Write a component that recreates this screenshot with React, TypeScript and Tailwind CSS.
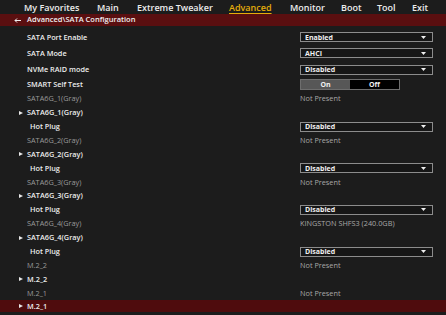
import React from 'react';

type Row = {
  label: string;
  kind: 'select' | 'toggle' | 'info' | 'head' | 'plain';
  value?: string;
  gray?: boolean;
  indent?: boolean;
  active?: boolean;
  h: string;
};

const tabs = [
  { name: 'My Favorites', w: 'w-[73px]' },
  { name: 'Main', w: 'w-[40px]' },
  { name: 'Extreme Tweaker', w: 'w-[92px]' },
  { name: 'Advanced', w: 'w-[61px]' },
  { name: 'Monitor', w: 'w-[51px]' },
  { name: 'Boot', w: 'w-[36px]' },
  { name: 'Tool', w: 'w-[35px]' },
  { name: 'Exit', w: 'w-[30px]' },
];

const rows: Row[] = [
  { label: 'SATA Port Enable', kind: 'select', value: 'Enabled', h: 'h-[16.3px]' },
  { label: 'SATA Mode', kind: 'select', value: 'AHCI', h: 'h-[16.3px]' },
  { label: 'NVMe RAID mode', kind: 'select', value: 'Disabled', h: 'h-[16.3px]' },
  { label: 'SMART Self Test', kind: 'toggle', h: 'h-[14px]' },
  { label: 'SATA6G_1(Gray)', kind: 'info', value: 'Not Present', gray: true, h: 'h-[13.9px]' },
  { label: 'SATA6G_1(Gray)', kind: 'head', h: 'h-[13.9px]' },
  { label: 'Hot Plug', kind: 'select', value: 'Disabled', indent: true, h: 'h-[13.9px]' },
  { label: 'SATA6G_2(Gray)', kind: 'info', value: 'Not Present', gray: true, h: 'h-[13.9px]' },
  { label: 'SATA6G_2(Gray)', kind: 'head', h: 'h-[13.9px]' },
  { label: 'Hot Plug', kind: 'select', value: 'Disabled', indent: true, h: 'h-[13.9px]' },
  { label: 'SATA6G_3(Gray)', kind: 'info', value: 'Not Present', gray: true, h: 'h-[13.9px]' },
  { label: 'SATA6G_3(Gray)', kind: 'head', h: 'h-[13.9px]' },
  { label: 'Hot Plug', kind: 'select', value: 'Disabled', indent: true, h: 'h-[13.9px]' },
  { label: 'SATA6G_4(Gray)', kind: 'info', value: 'KINGSTON SHFS3 (240.0GB)', gray: true, h: 'h-[13.9px]' },
  { label: 'SATA6G_4(Gray)', kind: 'head', h: 'h-[13.9px]' },
  { label: 'Hot Plug', kind: 'select', value: 'Disabled', indent: true, h: 'h-[13.9px]' },
  { label: 'M.2_2', kind: 'info', value: 'Not Present', gray: true, h: 'h-[13.9px]' },
  { label: 'M.2_2', kind: 'head', h: 'h-[13.9px]' },
  { label: 'M.2_1', kind: 'info', value: 'Not Present', gray: true, h: 'h-[13.9px]' },
  { label: 'M.2_1', kind: 'head', active: true, h: 'h-[11.8px]' },
];

function Caret() {
  return (
    <svg width="5" height="3" viewBox="0 0 5 3" className="shrink-0">
      <polygon points="0,0 5,0 2.5,3" fill="#f0f0f0" />
    </svg>
  );
}

function Pointer() {
  return (
    <svg width="4" height="4" viewBox="0 0 4 4" className="absolute left-[19px] top-1/2 -translate-y-1/2">
      <polygon points="0,0 4,2 0,4" fill="#e8e8e8" />
    </svg>
  );
}

function BackArrow() {
  return (
    <svg width="7" height="5" viewBox="0 0 7 5" className="ml-[14px] mr-[6px] shrink-0">
      <path d="M7 2.5H1M3 0.5L1 2.5L3 4.5" stroke="#f0f0f0" strokeWidth="1" fill="none" />
    </svg>
  );
}

function Select({ value }: { value: string }) {
  return (
    <div className="w-[133px] h-[10px] border border-[#8c8c8c] bg-[#161616] flex items-center justify-between pl-[4px] pr-[6px]">
      <span className="text-[7px] font-bold text-[#f0f0f0] leading-none">{value}</span>
      <Caret />
    </div>
  );
}

function Toggle() {
  return (
    <div className="w-[100px] h-[11px] border border-[#6e6e6e] flex text-[7px] font-bold leading-none text-[#f0f0f0]">
      <div className="w-[49px] bg-[#575757] flex items-center justify-center">On</div>
      <div className="flex-1 bg-black flex items-center justify-center">Off</div>
    </div>
  );
}

export default function App() {
  return (
    <div
      className="w-[446px] h-[315px] overflow-hidden bg-[#1c1c1c] text-[#e8e8e8]"
      style={{ fontFamily: '"Open Sans", "Liberation Sans", sans-serif' }}
    >
      {/* top tabs */}
      <div className="h-[14px] flex items-center pl-[24px] text-[9px] font-semibold leading-none">
        {tabs.map((t) => (
          <div key={t.name} className={`${t.w} shrink-0 whitespace-nowrap`}>
            <span
              className={
                t.name === 'Advanced'
                  ? 'text-[#e6ad0a] underline decoration-[1px] underline-offset-[1.5px]'
                  : 'text-[#ececec]'
              }
            >
              {t.name}
            </span>
          </div>
        ))}
      </div>

      {/* breadcrumb */}
      <div className="h-[12px] bg-[#5a0f10] flex items-center font-semibold leading-none text-[#f0f0f0]">
        <BackArrow />
        <span className="text-[7.5px]">Advanced\SATA Configuration</span>
      </div>

      <div className="mt-[3px] flex flex-col">
        {rows.map((r, i) => (
          <div
            key={i}
            className={`${r.h} shrink-0 relative flex items-center text-[7.3px] font-semibold leading-none ${
              r.active ? 'bg-[#4f0c0d]' : ''
            }`}
          >
            {r.kind === 'head' && <Pointer />}
            <div
              className={`w-[300px] ${r.indent ? 'pl-[30px]' : 'pl-[27px]'} ${
                r.gray ? 'text-[#9a9a9a] font-normal' : 'text-[#ededed]'
              }`}
            >
              {r.label}
            </div>
            <div className="flex-1">
              {r.kind === 'select' && <Select value={r.value!} />}
              {r.kind === 'toggle' && <Toggle />}
              {r.kind === 'info' && (
                <span className="text-[#a8a8a8] font-normal">{r.value}</span>
              )}
            </div>
          </div>
        ))}
      </div>
    </div>
  );
}
